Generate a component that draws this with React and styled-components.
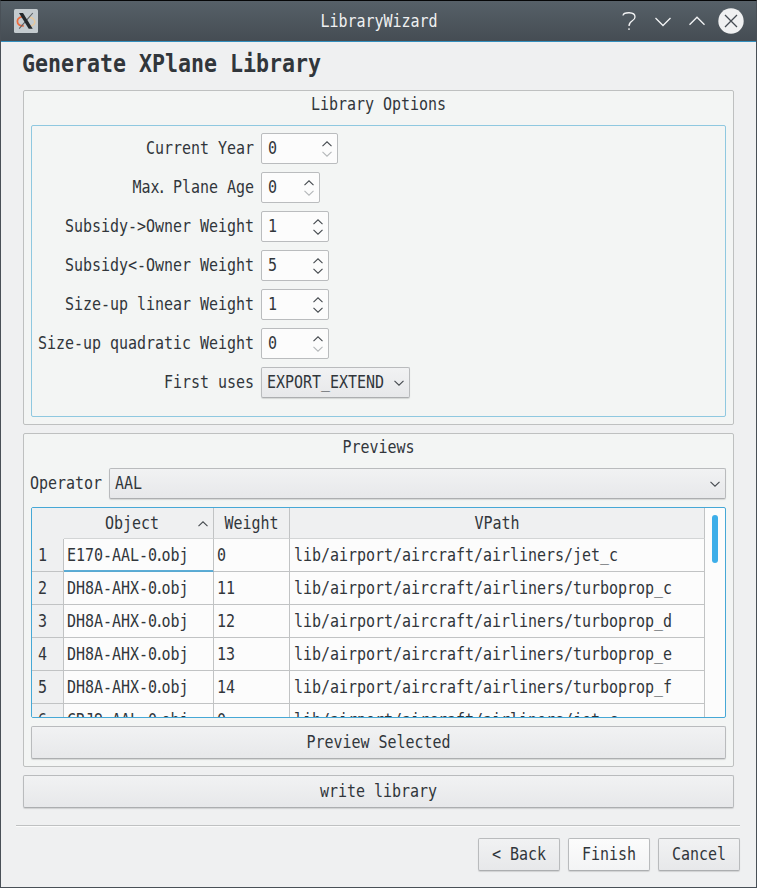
import React from "react";
import styled, { createGlobalStyle, css } from "styled-components";

const Global = createGlobalStyle`
  * { box-sizing: border-box; }
  body { margin: 0; background: #eff0f1; }
  body, button { font-family: "DejaVu Sans Mono", monospace; font-size: 15px; letter-spacing: -0.03px; color: #31363b; }
`;

const ink = "#454a4f";

const raised = css`
  border: 1px solid #b9bbbd;
  border-bottom-color: #acaeb0;
  border-radius: 2px;
  background: linear-gradient(#f1f2f3, #e7e8ea);
  box-shadow: 0 1px 1px rgba(0, 0, 0, 0.13);
`;

const TextSpan = styled.span`
  display: inline-block;
  white-space: pre;
  line-height: 18px;
  transform: translateY(${(p) => (p.$table ? 0 : -1)}px) scaleY(1.21);
`;

/* The period is half as wide as the other characters. */
const Period = styled.span`
  margin: 0 -2.3px;
`;

const Text = ({ children, table }) => {
  const parts = String(children).split(".");
  return (
    <TextSpan $table={table}>
      {parts.map((part, i) => (
        <React.Fragment key={i}>
          {i > 0 && <Period>.</Period>}
          {part}
        </React.Fragment>
      ))}
    </TextSpan>
  );
};

const Window = styled.div`
  width: 757px;
  height: 888px;
  display: flex;
  flex-direction: column;
  border: 1px solid #495057;
  border-top-color: #050607;
  background: #eff0f1;
  overflow: hidden;
`;

const TitleBar = styled.header`
  height: 41px;
  flex: none;
  display: grid;
  grid-template-columns: 150px 1fr 150px;
  align-items: center;
  padding: 0 12px 0 13px;
  color: #eff0f1;
  background: linear-gradient(#566068, #454c53);
  border-bottom: 1px solid #338fbe;
`;

const Caption = styled.div`
  padding-top: 1px;
  text-align: center;
`;

const WindowButtons = styled.div`
  display: flex;
  justify-content: flex-end;
  gap: 8px;
`;

const Content = styled.main`
  flex: 1;
  display: flex;
  flex-direction: column;
  padding: 0 22px;
`;

const Heading = styled.h1`
  margin: 0;
  height: 48px;
  padding-top: 9px;
  font-size: 21.6px;
  line-height: 26px;
  letter-spacing: 0;
  font-weight: bold;
`;

const HeadingText = styled.span`
  display: inline-block;
  white-space: pre;
  margin-left: -1px;
  transform: scaleY(1.17);
`;

const Group = styled.section`
  height: ${(p) => p.$height}px;
  margin-bottom: 8px;
  padding: 0 7px 7px;
  display: flex;
  flex-direction: column;
  border: 1px solid #bec0c0;
  border-radius: 2px;
  background: #f3f5f4;
`;

const GroupTitle = styled.div`
  height: 34px;
  flex: none;
  padding-top: 5px;
  text-align: center;
`;

const OptionsFrame = styled.div`
  flex: 1;
  padding: 7px 6px;
  display: flex;
  flex-direction: column;
  gap: 8px;
  border: 1px solid #8fc8e0;
  border-radius: 2px;
`;

const OptionRow = styled.div`
  height: 31px;
  display: grid;
  grid-template-columns: 216px auto;
  column-gap: 7px;
  align-items: center;
  justify-content: start;
`;

const Label = styled.label`
  text-align: right;
`;

const Spin = styled.div`
  width: ${(p) => p.$width}px;
  height: 31px;
  padding: 0 5px 0 6px;
  display: flex;
  align-items: center;
  justify-content: space-between;
  border: 1px solid #babcbe;
  border-radius: 2px;
  background: #fcfcfc;
`;

const Combo = styled.div`
  ${raised}
  height: 31px;
  width: ${(p) => (p.$width ? p.$width + "px" : "auto")};
  flex: ${(p) => (p.$width ? "none" : 1)};
  padding: 0 5px;
  display: flex;
  align-items: center;
  justify-content: space-between;
`;

const OperatorRow = styled.div`
  display: flex;
  align-items: center;
  gap: 7px;
  margin: 0 0 8px -1px;
`;

const Table = styled.div`
  height: 211px;
  margin-bottom: 8px;
  display: flex;
  border: 1px solid #46a8d6;
  border-radius: 2px;
  background: #fcfcfc;
  overflow: hidden;
`;

const Grid = styled.div`
  width: 673px;
  display: grid;
  grid-template-columns: 32px 150px 76px 415px;
  grid-template-rows: 31px repeat(6, 33px);
`;

const HeaderCell = styled.div`
  display: flex;
  align-items: center;
  justify-content: center;
  position: relative;
  background: #eff0f1;
  border-bottom: 1px solid #d3d5d6;
  border-right: 1px solid ${(p) => (p.$blank ? "transparent" : "#c1c3c4")};
  ${(p) => p.$blank && "border-bottom-color: transparent;"}
  ${(p) => p.$sorted && "padding-right: 13px;"}
`;

const SortMark = styled.span`
  position: absolute;
  right: 5px;
  top: 13px;
  display: flex;
`;

const Cell = styled.div`
  display: flex;
  align-items: center;
  padding-left: ${(p) => p.$pad || 3}px;
  border-right: 1px solid #c1c3c4;
  border-bottom: 1px solid ${(p) => (p.$current ? "#59a9d2" : "#c1c3c4")};
  ${(p) => p.$current && "box-shadow: inset 0 -1px #5cadd6;"}
  ${(p) => p.$index && "background: #eff0f1;"}
`;

const ScrollBar = styled.div`
  flex: 1;
  display: flex;
  justify-content: center;
  padding-top: 7px;
`;

const ScrollHandle = styled.div`
  width: 6px;
  height: 48px;
  border-radius: 3px;
  background: #3daee9;
`;

const Button = styled.button`
  ${raised}
  height: 33px;
  flex: none;
  padding: 0;
  width: ${(p) => (p.$width ? p.$width + "px" : "auto")};
  ${(p) => p.$light && "background: linear-gradient(#fcfcfc, #f3f4f5);"}
`;

const Footer = styled.footer`
  margin: 17px -6px 0 -7px;
  padding-top: 12px;
  display: flex;
  justify-content: flex-end;
  gap: 8px;
  border-top: 1px solid #bfc1c2;
  box-shadow: inset 0 1px #fbfbfb;
`;

const Chevron = ({ up, faint }) => (
  <svg width="10" height="6" viewBox="0 0 10 6" fill="none" stroke={faint ? "#b4b7b9" : ink} strokeWidth="1.1">
    <path d={up ? "M.5 5.2 5 .8l4.5 4.4" : "M.5.8 5 5.2 9.5.8"} />
  </svg>
);

const Steppers = styled.span`
  display: flex;
  flex-direction: column;
  gap: 4px;
`;

const LogoIcon = () => (
  <svg width="24" height="24" viewBox="0 0 24 24">
    <rect width="24" height="24" rx="1.5" fill="#c4cbcf" />
    <path d="M8.5 7.6C3.8 8 2.6 11.6 3.8 14.4c1 2 3.3 2.7 6 2.5" fill="none" stroke="#ec6a3c" strokeWidth="1.8" />
    <path d="M15 8c5 .8 7.2 4.4 5 7.2-1.4 1.6-4 2-6 1.8" fill="none" stroke="#e4c79e" strokeWidth="1.5" />
    <path d="M18.8 4 5.2 19.7" stroke="#5a6065" strokeWidth="1.1" />
    <path d="M5 4h4l9.7 15.8h-4z" fill="#24292d" />
  </svg>
);

const TitleIcon = ({ kind }) => (
  <svg width="26" height="26" viewBox="0 0 26 26" fill="none" stroke="#f3f4f5" strokeWidth="1.3">
    {kind === "help" && <path d="M7 7.5C7.6 4 19 3.2 19 9c0 4.5-6 3-6 9M13 20.3v1.6" />}
    {kind === "down" && <path d="m5.5 10 7.5 7.5 7.5-7.5" />}
    {kind === "up" && <path d="m5.5 16.7 7.5-7.5 7.5 7.5" />}
    {kind === "close" && (
      <>
        <circle cx="13" cy="13" r="12.7" fill="#eff0f1" stroke="none" />
        <path d="m7 7 12 12M19 7 7 19" stroke="#444b52" />
      </>
    )}
  </svg>
);

const options = [
  ["Current Year", 0, 77],
  ["Max. Plane Age", 0, 59],
  ["Subsidy->Owner Weight", 1, 68],
  ["Subsidy<-Owner Weight", 5, 68],
  ["Size-up linear Weight", 1, 68],
  ["Size-up quadratic Weight", 0, 68],
];

const rows = [
  ["E170-AAL-0.obj", 0, "jet_c"],
  ["DH8A-AHX-0.obj", 11, "turboprop_c"],
  ["DH8A-AHX-0.obj", 12, "turboprop_d"],
  ["DH8A-AHX-0.obj", 13, "turboprop_e"],
  ["DH8A-AHX-0.obj", 14, "turboprop_f"],
  ["CRJ9-AAL-0.obj", 0, "jet_c"],
];

export default function App() {
  return (
    <Window>
      <Global />
      <TitleBar>
        <LogoIcon />
        <Caption><Text>LibraryWizard</Text></Caption>
        <WindowButtons>
          {["help", "down", "up", "close"].map((k) => <TitleIcon key={k} kind={k} />)}
        </WindowButtons>
      </TitleBar>
      <Content>
        <Heading><HeadingText>Generate XPlane Library</HeadingText></Heading>
        <Group $height={335}>
          <GroupTitle><Text>Library Options</Text></GroupTitle>
          <OptionsFrame>
            {options.map(([name, value, width]) => (
              <OptionRow key={name}>
                <Label><Text>{name}</Text></Label>
                <Spin $width={width}>
                  <Text>{value}</Text>
                  <Steppers><Chevron up /><Chevron faint={value === 0} /></Steppers>
                </Spin>
              </OptionRow>
            ))}
            <OptionRow>
              <Label><Text>First uses</Text></Label>
              <Combo $width={149}><Text>EXPORT_EXTEND</Text><Chevron /></Combo>
            </OptionRow>
          </OptionsFrame>
        </Group>
        <Group $height={334}>
          <GroupTitle><Text>Previews</Text></GroupTitle>
          <OperatorRow>
            <Label><Text>Operator</Text></Label>
            <Combo><Text>AAL</Text><Chevron /></Combo>
          </OperatorRow>
          <Table>
            <Grid>
              <HeaderCell $blank />
              <HeaderCell $sorted><Text table>Object</Text><SortMark><Chevron up /></SortMark></HeaderCell>
              <HeaderCell><Text table>Weight</Text></HeaderCell>
              <HeaderCell><Text table>VPath</Text></HeaderCell>
              {rows.map(([object, weight, path], i) => (
                <React.Fragment key={i}>
                  <Cell $index $pad={6}><Text table>{i + 1}</Text></Cell>
                  <Cell $current={i === 0}><Text table>{object}</Text></Cell>
                  <Cell><Text table>{weight}</Text></Cell>
                  <Cell $pad={4}><Text table>{"lib/airport/aircraft/airliners/" + path}</Text></Cell>
                </React.Fragment>
              ))}
            </Grid>
            <ScrollBar><ScrollHandle /></ScrollBar>
          </Table>
          <Button><Text>Preview Selected</Text></Button>
        </Group>
        <Button><Text>write library</Text></Button>
        <Footer>
          <Button $width={82}><Text>{"< Back"}</Text></Button>
          <Button $width={82} $light><Text>Finish</Text></Button>
          <Button $width={82}><Text>Cancel</Text></Button>
        </Footer>
      </Content>
    </Window>
  );
}
